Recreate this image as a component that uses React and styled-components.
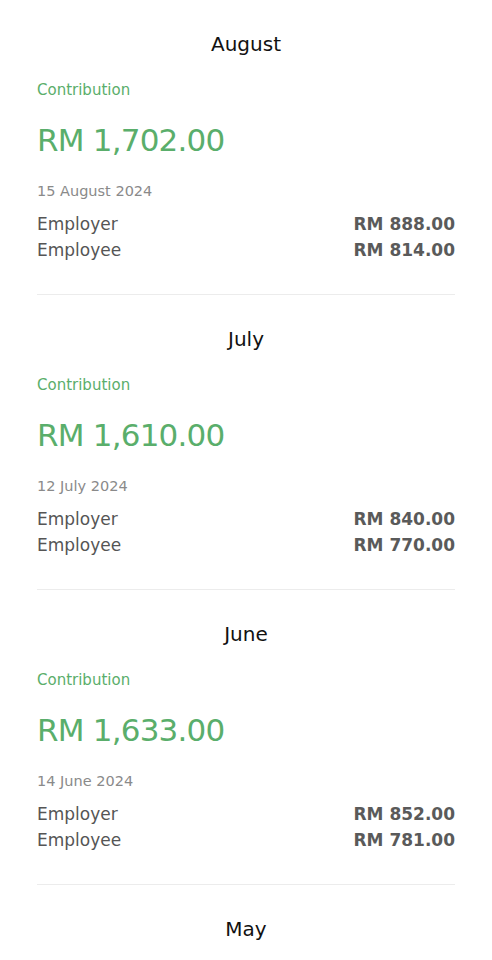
import React from "react";
import styled, { createGlobalStyle } from "styled-components";

const Global = createGlobalStyle`
  body { margin: 0; background: #fff; font-family: "DejaVu Sans", sans-serif; }
`;

const Page = styled.div`
  width: 492px;
  padding: 0 37px;
  box-sizing: border-box;
`;

const Section = styled.section`
  display: flex;
  flex-direction: column;
  padding-top: 31px;
  padding-bottom: 31px;
  border-bottom: ${(p) => (p.$last ? "none" : "1px solid #ececec")};
`;

const Month = styled.h2`
  margin: 0;
  text-align: center;
  font-size: 20px;
  font-weight: 400;
  color: #111;
  line-height: 26px;
`;

const Label = styled.div`
  margin-top: 23px;
  font-size: 15px;
  color: #5aae6b;
  line-height: 20px;
`;

const Amount = styled.div`
  margin-top: 20px;
  font-size: 31px;
  color: #5aae6b;
  line-height: 40px;
  letter-spacing: -0.8px;
`;

const DateText = styled.div`
  margin-top: 21px;
  font-size: 14.5px;
  color: #8a8a8a;
  line-height: 20px;
`;

const Rows = styled.div`
  margin-top: 10px;
  display: flex;
  flex-direction: column;
`;

const Row = styled.div`
  display: flex;
  justify-content: space-between;
  font-size: 17px;
  line-height: 26px;
  color: #555;
`;

const Value = styled.span`
  font-weight: 600;
  color: #5a5a5a;
`;

const data = [
  { month: "August", total: "RM 1,702.00", date: "15 August 2024", er: "RM 888.00", ee: "RM 814.00" },
  { month: "July", total: "RM 1,610.00", date: "12 July 2024", er: "RM 840.00", ee: "RM 770.00" },
  { month: "June", total: "RM 1,633.00", date: "14 June 2024", er: "RM 852.00", ee: "RM 781.00" },
];

export default function App() {
  return (
    <Page>
      <Global />
      {data.map((d) => (
        <Section key={d.month}>
          <Month>{d.month}</Month>
          <Label>Contribution</Label>
          <Amount>{d.total}</Amount>
          <DateText>{d.date}</DateText>
          <Rows>
            <Row><span>Employer</span><Value>{d.er}</Value></Row>
            <Row><span>Employee</span><Value>{d.ee}</Value></Row>
          </Rows>
        </Section>
      ))}
      <Section $last>
        <Month>May</Month>
      </Section>
    </Page>
  );
}
